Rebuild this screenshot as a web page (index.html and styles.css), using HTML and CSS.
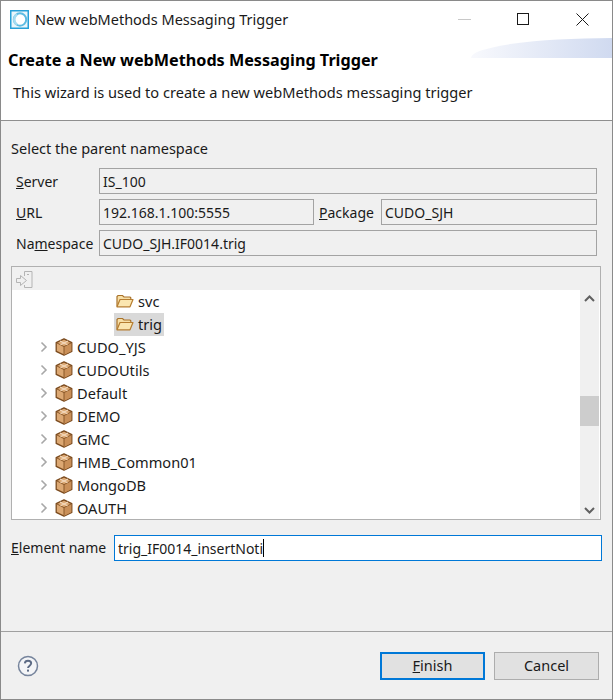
FILE: index.html
```html
<!DOCTYPE html>
<html lang="en">
<head>
  <meta charset="UTF-8" />
  <title>New webMethods Messaging Trigger</title>
  <link rel="stylesheet" href="styles.css">
</head>
<body>

  <svg class="defs" width="0" height="0">
    <symbol id="chev" viewBox="0 0 8 12">
      <path d="M1.500 1.500 6 6l-4.500 4.500" fill="none" stroke="#a8a8a8" stroke-width="1.600"/>
    </symbol>
    <symbol id="pkg" viewBox="0 0 18 18">
      <path d="M9 .8 16.800 4.600v8.800L9 17.200 1.200 13.400V4.600z" fill="#dca873" stroke="#7a4a1e" stroke-width="1.300" stroke-linejoin="round"/>
      <path d="M9 9v8l7.300-3.800V5.200z" fill="#c98f58"/>
      <path d="M2 5 9 8.600 16 5M9 8.600V16.800" fill="none" stroke="#8a5829" stroke-width="1"/>
      <path d="M5 3 12.500 6.800M13 3 5.500 6.800" fill="none" stroke="#f3d9bd" stroke-width="1.200"/>
    </symbol>
    <symbol id="folder" viewBox="0 0 18 14">
      <path d="M1 12.500V2.500L2 1.500h4.500L8 3h6l.8.8V5" fill="#f7dfa6" stroke="#a9722a" stroke-width="1.200"/>
      <path d="M1 12.800 4 5.500h13L14 12.800z" fill="#fbe6b0" stroke="#b67d30" stroke-width="1.200" stroke-linejoin="round"/>
    </symbol>
  </svg>

  <div class="window">

    <div class="titlebar">
      <svg class="app-icon" width="19" height="19" viewBox="0 0 19 19">
        <rect x=".75" y=".75" width="17.500" height="17.500" fill="#eaf6fb" stroke="#27a0d8" stroke-width="1.500"/>
        <circle cx="10" cy="9.500" r="6.200" fill="#fff" stroke="#5dbbe2" stroke-width="2"/>
        <path d="M7 4.500a6 6 0 0 0 0 10" fill="none" stroke="#a6dcf1" stroke-width="2.500"/>
      </svg>
      <span class="title-text">New webMethods Messaging Trigger</span>
      <div class="win-buttons">
        <svg width="13" height="13" viewBox="0 0 13 13"><path d="M0 6.500h13" stroke="#c8c8c8"/></svg>
        <svg width="13" height="13" viewBox="0 0 13 13"><rect x=".5" y=".5" width="11" height="11" fill="none" stroke="#1a1a1a"/></svg>
        <svg width="13" height="13" viewBox="0 0 13 13"><path d="M.5.500l12 12M12.500.500l-12 12" stroke="#1a1a1a"/></svg>
      </div>
    </div>

    <div class="banner">
      <div class="banner-shape"></div>
      <h1>Create a New webMethods Messaging Trigger</h1>
      <p>This wizard is used to create a new webMethods messaging trigger</p>
    </div>

    <div class="content">
      <div class="section-label">Select the parent namespace</div>

      <div class="form">
        <label><u>S</u>erver</label>
        <div class="field wide">IS_100</div>
        <label><u>U</u>RL</label>
        <div class="field">192.168.1.100:5555</div>
        <label class="mid"><u>P</u>ackage</label>
        <div class="field">CUDO_SJH</div>
        <label>Na<u>m</u>espace</label>
        <div class="field wide">CUDO_SJH.IF0014.trig</div>
      </div>

      <div class="tree-box">
        <div class="tree-toolbar">
          <svg width="18" height="18" viewBox="0 0 18 18" fill="none" stroke="#b4b4b4">
            <path d="M8.500 6V1.500h7.500v16H8.500v-2.500"/>
            <path d="M.5 8.500h4v-3l6 5-6 5v-3h-4z"/>
            <path d="M11 4.500h2"/>
          </svg>
        </div>
        <div class="tree-main">
          <div class="tree-rows">
            <div class="row child"><svg class="ico-folder"><use href="#folder"/></svg><span class="name">svc</span></div>
            <div class="row child"><span class="sel"><svg class="ico-folder"><use href="#folder"/></svg><span class="name">trig</span></span></div>
            <div class="row"><svg class="ico-chev"><use href="#chev"/></svg><svg class="ico-pkg"><use href="#pkg"/></svg><span class="name">CUDO_YJS</span></div>
            <div class="row"><svg class="ico-chev"><use href="#chev"/></svg><svg class="ico-pkg"><use href="#pkg"/></svg><span class="name">CUDOUtils</span></div>
            <div class="row"><svg class="ico-chev"><use href="#chev"/></svg><svg class="ico-pkg"><use href="#pkg"/></svg><span class="name">Default</span></div>
            <div class="row"><svg class="ico-chev"><use href="#chev"/></svg><svg class="ico-pkg"><use href="#pkg"/></svg><span class="name">DEMO</span></div>
            <div class="row"><svg class="ico-chev"><use href="#chev"/></svg><svg class="ico-pkg"><use href="#pkg"/></svg><span class="name">GMC</span></div>
            <div class="row"><svg class="ico-chev"><use href="#chev"/></svg><svg class="ico-pkg"><use href="#pkg"/></svg><span class="name">HMB_Common01</span></div>
            <div class="row"><svg class="ico-chev"><use href="#chev"/></svg><svg class="ico-pkg"><use href="#pkg"/></svg><span class="name">MongoDB</span></div>
            <div class="row"><svg class="ico-chev"><use href="#chev"/></svg><svg class="ico-pkg"><use href="#pkg"/></svg><span class="name">OAUTH</span></div>
          </div>
          <div class="scrollbar">
            <svg width="19" height="17" viewBox="0 0 19 17"><path d="M5 11l4.500-4.500L14 11" fill="none" stroke="#606060" stroke-width="2"/></svg>
            <div class="track"><div class="thumb"></div></div>
            <svg width="19" height="17" viewBox="0 0 19 17"><path d="M5 6l4.500 4.500L14 6" fill="none" stroke="#606060" stroke-width="2"/></svg>
          </div>
        </div>
      </div>

      <div class="element-row">
        <label><u>E</u>lement name</label>
        <div class="element-input"><span>trig_IF0014_insertNoti</span><span class="caret"></span></div>
      </div>
    </div>

    <div class="footer">
      <svg width="22" height="22" viewBox="0 0 22 22">
        <circle cx="11" cy="11" r="9.500" fill="#f4f5f7" stroke="#76849c" stroke-width="1.500"/>
        <path d="M7.800 8.300C8 6.500 9.300 5.700 11 5.700c1.900 0 3.200 1 3.200 2.600 0 2.400-3.200 2.300-3.200 4.800" fill="none" stroke="#5d6b85" stroke-width="1.900"/>
        <rect x="10" y="14.600" width="2" height="2" fill="#5d6b85"/>
      </svg>
      <div class="buttons">
        <button class="btn primary"><u>F</u>inish</button>
        <button class="btn">Cancel</button>
      </div>
    </div>

  </div>

</body>
</html>
```

FILE: styles.css
```css
* {
  box-sizing: border-box;
}

html, body {
  margin: 0;
  height: 100%;
}

body {
  font-family: "Noto Sans", "Noto Sans CJK KR", sans-serif;
  font-size: 14px;
  color: #1a1a1a;
  background: #f0f0f0;
}

.defs {
  display: block;
  height: 0;
}

.window {
  display: flex;
  flex-direction: column;
  width: 613px;
  height: 700px;
  border: 1px solid #8a8a8a;
  overflow: hidden;
}

.titlebar {
  display: flex;
  align-items: center;
  height: 37px;
  padding-left: 9px;
  background: #fff;
}

.app-icon {
  margin-right: 6px;
}

.title-text {
  font-size: 14.5px;
  margin-bottom: 2px;
}

.win-buttons {
  display: flex;
  gap: 46px;
  margin-left: auto;
  margin-right: 23px;
}

.banner {
  position: relative;
  height: 83px;
  padding-left: 7px;
  background: #fff;
  border-bottom: 1px solid #8f8f8f;
}

.banner-shape {
  position: absolute;
  top: 0;
  right: 0;
  width: 141px;
  height: 20px;
  background: linear-gradient(90deg, #f8f9fd, #d0daf0);
  border-top-left-radius: 100% 100%;
}

.banner h1 {
  position: relative;
  margin: 0;
  padding-top: 11px;
  font-size: 16.2px;
  line-height: 22px;
  font-weight: 700;
  color: #000;
}

.banner p {
  margin: 11px 0 0 5px;
  font-size: 14.6px;
  line-height: 20px;
}

.content {
  flex: 1;
  padding: 17px 10px 0;
}

.section-label {
  font-size: 14.5px;
  line-height: 20px;
  margin-bottom: 10px;
}

.form {
  display: grid;
  grid-template-columns: 83px 215px 67px 216px;
  grid-auto-rows: 26px;
  row-gap: 5px;
  margin-left: 5px;
  align-items: center;
}

.form label {
  white-space: nowrap;
}

.form .mid {
  padding-left: 5px;
}

.field {
  height: 26px;
  padding-left: 3px;
  line-height: 25px;
  border: 1px solid #a3a3a3;
  white-space: nowrap;
}

.field.wide {
  grid-column: span 3;
}

.tree-box {
  width: 590px;
  height: 254px;
  margin-top: 10px;
  border: 1px solid #b0b0b0;
  background: #fff;
  display: flex;
  flex-direction: column;
}

.tree-toolbar {
  display: flex;
  align-items: center;
  height: 23px;
  padding-left: 4px;
  background: #f0f0f0;
}

.tree-main {
  flex: 1;
  display: flex;
  min-height: 0;
}

.tree-rows {
  flex: 1;
  overflow: hidden;
}

.row {
  display: flex;
  align-items: center;
  height: 23px;
  padding-left: 28px;
  padding-bottom: 1px;
  font-size: 14.6px;
}

.row.child {
  padding-left: 102px;
}

.sel {
  display: flex;
  align-items: center;
  height: 23px;
  width: 50px;
  margin-bottom: -1px;
  padding-bottom: 1px;
  background: #d9d9d9;
}

.ico-chev {
  width: 8px;
  height: 12px;
  margin-right: 7px;
}

.ico-pkg {
  width: 18px;
  height: 18px;
  margin-right: 4px;
}

.ico-folder {
  width: 18px;
  height: 14px;
  margin: 0 4px 0 2px;
}

.name {
  white-space: nowrap;
}

.scrollbar {
  display: flex;
  flex-direction: column;
  width: 19px;
  margin-right: 1px;
  background: #f0f0f0;
}

.track {
  flex: 1;
  padding-top: 89px;
}

.thumb {
  height: 30px;
  background: #cdcdcd;
}

.element-row {
  display: flex;
  align-items: center;
  margin-top: 15px;
}

.element-row label {
  width: 103px;
  white-space: nowrap;
  margin-bottom: 2px;
}

.element-input {
  display: flex;
  align-items: center;
  width: 488px;
  height: 26px;
  padding-left: 3px;
  background: #fff;
  border: 1px solid #0078d7;
}

.caret {
  width: 1px;
  height: 18px;
  background: #000;
}

.footer {
  display: flex;
  align-items: center;
  justify-content: space-between;
  height: 68px;
  padding: 0 13px 0 16px;
  border-top: 1px solid #a0a0a0;
}

.buttons {
  display: flex;
  gap: 9px;
}

.btn {
  width: 105px;
  height: 28px;
  padding: 0 0 2px;
  font: inherit;
  font-size: 14.5px;
  color: #1a1a1a;
  background: #e1e1e1;
  border: 1px solid #adadad;
}

.btn.primary {
  border: 2px solid #0078d7;
}
```
